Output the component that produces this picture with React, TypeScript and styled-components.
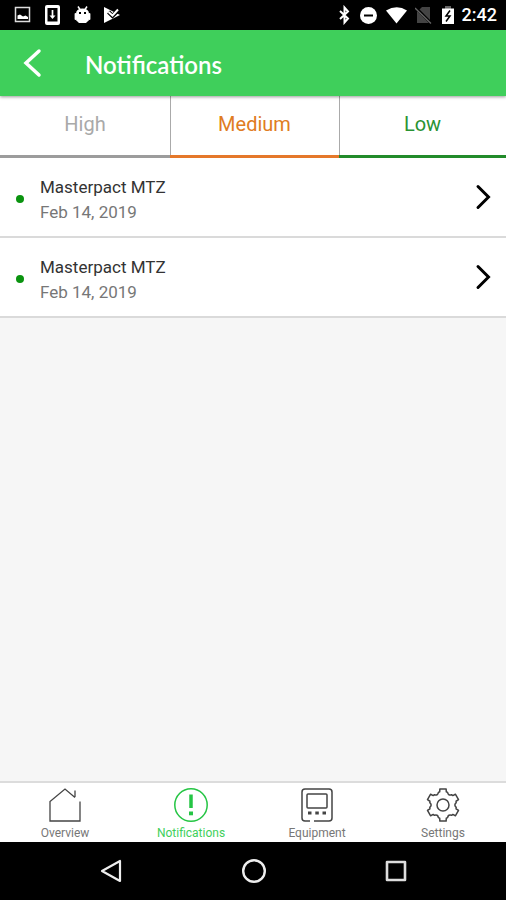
import React from "react";
import styled, { createGlobalStyle } from "styled-components";

const Global = createGlobalStyle`
  * { box-sizing: border-box; }
  html, body, #root { height: 100%; margin: 0; }
  body { font-family: Roboto, "Liberation Sans", sans-serif; background: #f6f6f6; }
  button { font: inherit; border: 0; margin: 0; padding: 0; background: none; cursor: pointer; }
`;

const Screen = styled.div`
  display: flex;
  flex-direction: column;
  min-height: 100vh;
`;

const StatusBar = styled.div`
  display: flex;
  justify-content: space-between;
  align-items: center;
  height: 30px;
  padding: 0 9px 0 14px;
  background: #000;
  color: #fff;
`;

const StatusGroup = styled.div<{ $gap: number }>`
  display: flex;
  align-items: center;
  gap: ${(p) => p.$gap}px;
  svg { display: block; }
`;

const Clock = styled.time`
  font-size: 18px;
  line-height: 20px;
  font-weight: 500;
`;

const Header = styled.header`
  display: flex;
  align-items: center;
  gap: 40px;
  height: 66px;
  padding: 0 20px;
  background: #3fcf5b;
  color: #fff;
  box-shadow: 0 1px 3px rgba(0, 0, 0, 0.4);
  z-index: 1;
`;

const BackButton = styled.button`
  display: flex;
  color: #fff;
`;

const Title = styled.h1`
  margin: 0;
  padding-top: 4px;
  font-family: Lato, sans-serif;
  font-size: 24px;
  line-height: 32px;
  font-weight: 600;
`;

const Tabs = styled.div`
  display: grid;
  grid-template-columns: 170fr 169fr 167fr;
  height: 62px;
  background: #fff;
`;

const Tab = styled.button<{ $color: string; $line: string }>`
  padding-bottom: 3px;
  border-bottom: 3px solid ${(p) => p.$line};
  color: ${(p) => p.$color};
  font-size: 20px;
  line-height: 24px;
  & + & { box-shadow: inset 1px 0 0 #aaa; }
`;

const List = styled.ul`
  flex: 1;
  margin: 0;
  padding: 0;
  list-style: none;
`;

const Row = styled.button`
  display: flex;
  align-items: center;
  width: 100%;
  height: 80px;
  padding: 0 15px 0 16px;
  background: #fff;
  border-bottom: 2px solid #dadada;
  text-align: left;
`;

const Dot = styled.span`
  width: 8px;
  height: 8px;
  margin: 4px 16px 0 0;
  border-radius: 50%;
  background: #0a930f;
`;

const RowText = styled.span`
  display: flex;
  flex: 1;
  flex-direction: column;
  padding-top: 6px;
`;

const Name = styled.span`
  color: #333;
  font-size: 17px;
  line-height: 25px;
`;

const DateText = styled(Name)`
  color: #777;
`;

const BottomNav = styled.nav`
  display: grid;
  grid-template-columns: repeat(4, 1fr);
  height: 61px;
  padding-left: 2px;
  border-top: 2px solid #dcdcdc;
  background: #fff;
`;

const NavItem = styled.button<{ $active?: boolean }>`
  display: flex;
  flex-direction: column;
  align-items: center;
  padding-top: 4px;
  color: ${(p) => (p.$active ? "#25c544" : "#444")};
`;

const NavLabel = styled.span<{ $active?: boolean }>`
  color: ${(p) => (p.$active ? "#3fcf5b" : "#777")};
  font-size: 12px;
  line-height: 14px;
  margin-top: 3px;
`;

const SystemBar = styled.div`
  display: grid;
  grid-template-columns: repeat(3, 142px);
  justify-content: center;
  height: 58px;
  padding-left: 2px;
  background: #000;
`;

const SystemButton = styled.button`
  display: flex;
  align-items: center;
  justify-content: center;
`;

const stroke = { fill: "none", stroke: "currentColor" };

const gearPath = (() => {
  const pts: string[] = [];
  const at = (r: number, deg: number) => {
    const a = (deg * Math.PI) / 180;
    return `${(18 + r * Math.cos(a)).toFixed(2)} ${(18 + r * Math.sin(a)).toFixed(2)}`;
  };
  for (let i = 0; i < 6; i++) {
    const c = -90 + i * 60;
    pts.push(`${i ? "L" : "M"}${at(13.4, c - 20)} L${at(13.6, c - 14)} L${at(16.4, c - 11)}`);
    pts.push(`L${at(16.4, c + 11)} L${at(13.6, c + 14)} L${at(13.4, c + 20)}`);
    pts.push(`Q${at(10.5, c + 30)} ${at(13.4, c + 40)}`);
  }
  return pts.join(" ") + "Z";
})();

const HomeIcon = () => (
  <svg width="36" height="36" viewBox="0 0 36 36" {...stroke} strokeWidth="1.3">
    <path d="M28 10V3.500M28 10.500L18 2 3 14.500V34H33V14.500" />
  </svg>
);

const AlertIcon = () => (
  <svg width="36" height="36" viewBox="0 0 36 36" {...stroke} strokeWidth="1.500">
    <circle cx="18" cy="18" r="16.200" />
    <path d="M18 7.500V21" strokeWidth="3.500" />
    <path d="M18 24.500V28.300" strokeWidth="4" />
  </svg>
);

const DeviceIcon = () => (
  <svg width="36" height="36" viewBox="0 0 36 36" {...stroke} strokeWidth="1.500">
    <path d="M11 34H6Q3 34 3 31V5Q3 2 6 2H30Q33 2 33 5V31Q33 34 30 34H15" />
    <rect x="8" y="7" width="20" height="14" rx="1" />
    <path d="M9 26h3.500M16.300 26h3.500M23.500 26H27" strokeWidth="3" />
  </svg>
);

const GearIcon = () => (
  <svg width="36" height="36" viewBox="0 0 36 36" {...stroke} strokeWidth="1.500" strokeLinejoin="round">
    <path d={gearPath} />
    <circle cx="18" cy="18" r="6" />
  </svg>
);

const Chevron = () => (
  <svg width="16" height="28" viewBox="0 0 16 28" {...stroke} strokeWidth="3" strokeLinecap="round">
    <path d="M3 3.500L13.500 14 3 24.500" />
  </svg>
);

const tabs = [
  { label: "High", color: "#a9a9a9", line: "#9c9c9c" },
  { label: "Medium", color: "#e07c22", line: "#e5782a" },
  { label: "Low", color: "#2a9333", line: "#228b2a" },
];

const notifications = [
  { id: 1, name: "Masterpact MTZ", date: "Feb 14, 2019" },
  { id: 2, name: "Masterpact MTZ", date: "Feb 14, 2019" },
];

const navItems = [
  { label: "Overview", Icon: HomeIcon },
  { label: "Notifications", Icon: AlertIcon, active: true },
  { label: "Equipment", Icon: DeviceIcon },
  { label: "Settings", Icon: GearIcon },
];

export default function App() {
  return (
    <Screen>
      <Global />
      <StatusBar>
        <StatusGroup $gap={12}>
          <svg width="18" height="18" viewBox="0 0 18 18">
            <path d="M1.500 1.500h14v14h-14z" fill="none" stroke="#ddd" strokeWidth="1.500" />
            <path d="M3.500 13V9.500l2.500-1 3 2 2.500-1 2.500 1.500v2z" fill="#fff" />
          </svg>
          <svg width="18" height="22" viewBox="0 0 18 22">
            <path fillRule="evenodd" fill="#fff" d="M3 1h11q2 0 2 2v16q0 2-2 2H3q-2 0-2-2V3q0-2 2-2zM3.500 4v13.500h10V4z" />
            <path d="M8.500 6V13" fill="none" stroke="#fff" strokeWidth="1.700" />
            <path d="M5.500 11.500h6L8.500 15z" fill="#fff" />
          </svg>
          <svg width="18" height="20" viewBox="0 0 18 20">
            <path d="M4 1.500l2 3M13 1.500l-2 3" stroke="#fff" strokeWidth="1.500" />
            <path fill="#fff" fillRule="evenodd" d="M2 9Q2 3.500 8.500 3.500T15 9v5q0 2-1.500 2.500L12 18H5l-1.500-1.500Q2 16 2 14zM5 7v2h2V7zM10 7v2h2V7z" />
            <path d="M1.500 9v5M15.500 9v5" stroke="#fff" strokeWidth="1.800" strokeLinecap="round" />
          </svg>
          <svg width="18" height="20" viewBox="0 0 18 20">
            <path fill="#fff" d="M0 2L16 10 0 18z" />
            <path d="M4.500 7l4 4L16 3.500" fill="none" stroke="#000" strokeWidth="4" />
            <path d="M4.500 7l4 3.500L14 4.500" fill="none" stroke="#fff" strokeWidth="2" />
          </svg>
        </StatusGroup>
        <StatusGroup $gap={8}>
          <svg width="14" height="20" viewBox="0 0 14 20">
            <path d="M3 6l8 7.500L7.500 17.500v-15L11 6.500l-8 7.500" fill="none" stroke="#fff" strokeWidth="2" />
          </svg>
          <svg width="18" height="18" viewBox="0 0 18 18">
            <circle cx="9.500" cy="9.500" r="8.500" fill="#fff" />
            <path d="M5 9.500h9" stroke="#000" strokeWidth="2" />
          </svg>
          <svg width="22" height="18" viewBox="0 0 22 18">
            <path fill="#fff" d="M1 4.500Q12-2 22 4.500L11.500 17.500z" />
          </svg>
          <svg width="17" height="18" viewBox="0 0 17 18">
            <path d="M7 1h8v16H2V6z" fill="#444" />
            <path d="M1 2l15 15" stroke="#000" strokeWidth="3" />
            <path d="M0 2l16 15.500" stroke="#666" strokeWidth="1.300" />
          </svg>
          <svg width="14" height="20" viewBox="0 0 14 20">
            <path d="M5 1h6v3H5z" fill="#666" />
            <path fill="#fff" d="M2 3.500h12V19H2z" />
            <path d="M10 5.500L6 11h4l-4 5.500" fill="none" stroke="#000" strokeWidth="1.500" />
          </svg>
          <Clock>2:42</Clock>
        </StatusGroup>
      </StatusBar>
      <Header>
        <BackButton aria-label="Back">
          <svg width="25" height="32" viewBox="0 0 25 32" {...stroke} strokeWidth="3.500" strokeLinecap="round">
            <path d="M19 4L6 16l13 12" />
          </svg>
        </BackButton>
        <Title>Notifications</Title>
      </Header>
      <Tabs role="tablist">
        {tabs.map((t) => (
          <Tab key={t.label} role="tab" $color={t.color} $line={t.line}>
            {t.label}
          </Tab>
        ))}
      </Tabs>
      <List>
        {notifications.map((n) => (
          <li key={n.id}>
            <Row>
              <Dot />
              <RowText>
                <Name>{n.name}</Name>
                <DateText>{n.date}</DateText>
              </RowText>
              <Chevron />
            </Row>
          </li>
        ))}
      </List>
      <BottomNav>
        {navItems.map(({ label, Icon, active }) => (
          <NavItem key={label} $active={active}>
            <Icon />
            <NavLabel $active={active}>{label}</NavLabel>
          </NavItem>
        ))}
      </BottomNav>
      <SystemBar>
        <SystemButton aria-label="Back">
          <svg width="26" height="26" viewBox="0 0 26 26" fill="none" stroke="#eee" strokeWidth="2.200" strokeLinejoin="round">
            <path d="M21 3v20L3 13z" />
          </svg>
        </SystemButton>
        <SystemButton aria-label="Home">
          <svg width="26" height="26" viewBox="0 0 26 26" fill="none" stroke="#eee" strokeWidth="2.400">
            <circle cx="13" cy="13" r="10.800" />
          </svg>
        </SystemButton>
        <SystemButton aria-label="Recent apps">
          <svg width="26" height="26" viewBox="0 0 26 26" fill="none" stroke="#ddd" strokeWidth="2.600" strokeLinejoin="round">
            <rect x="4" y="4" width="18" height="18" />
          </svg>
        </SystemButton>
      </SystemBar>
    </Screen>
  );
}
